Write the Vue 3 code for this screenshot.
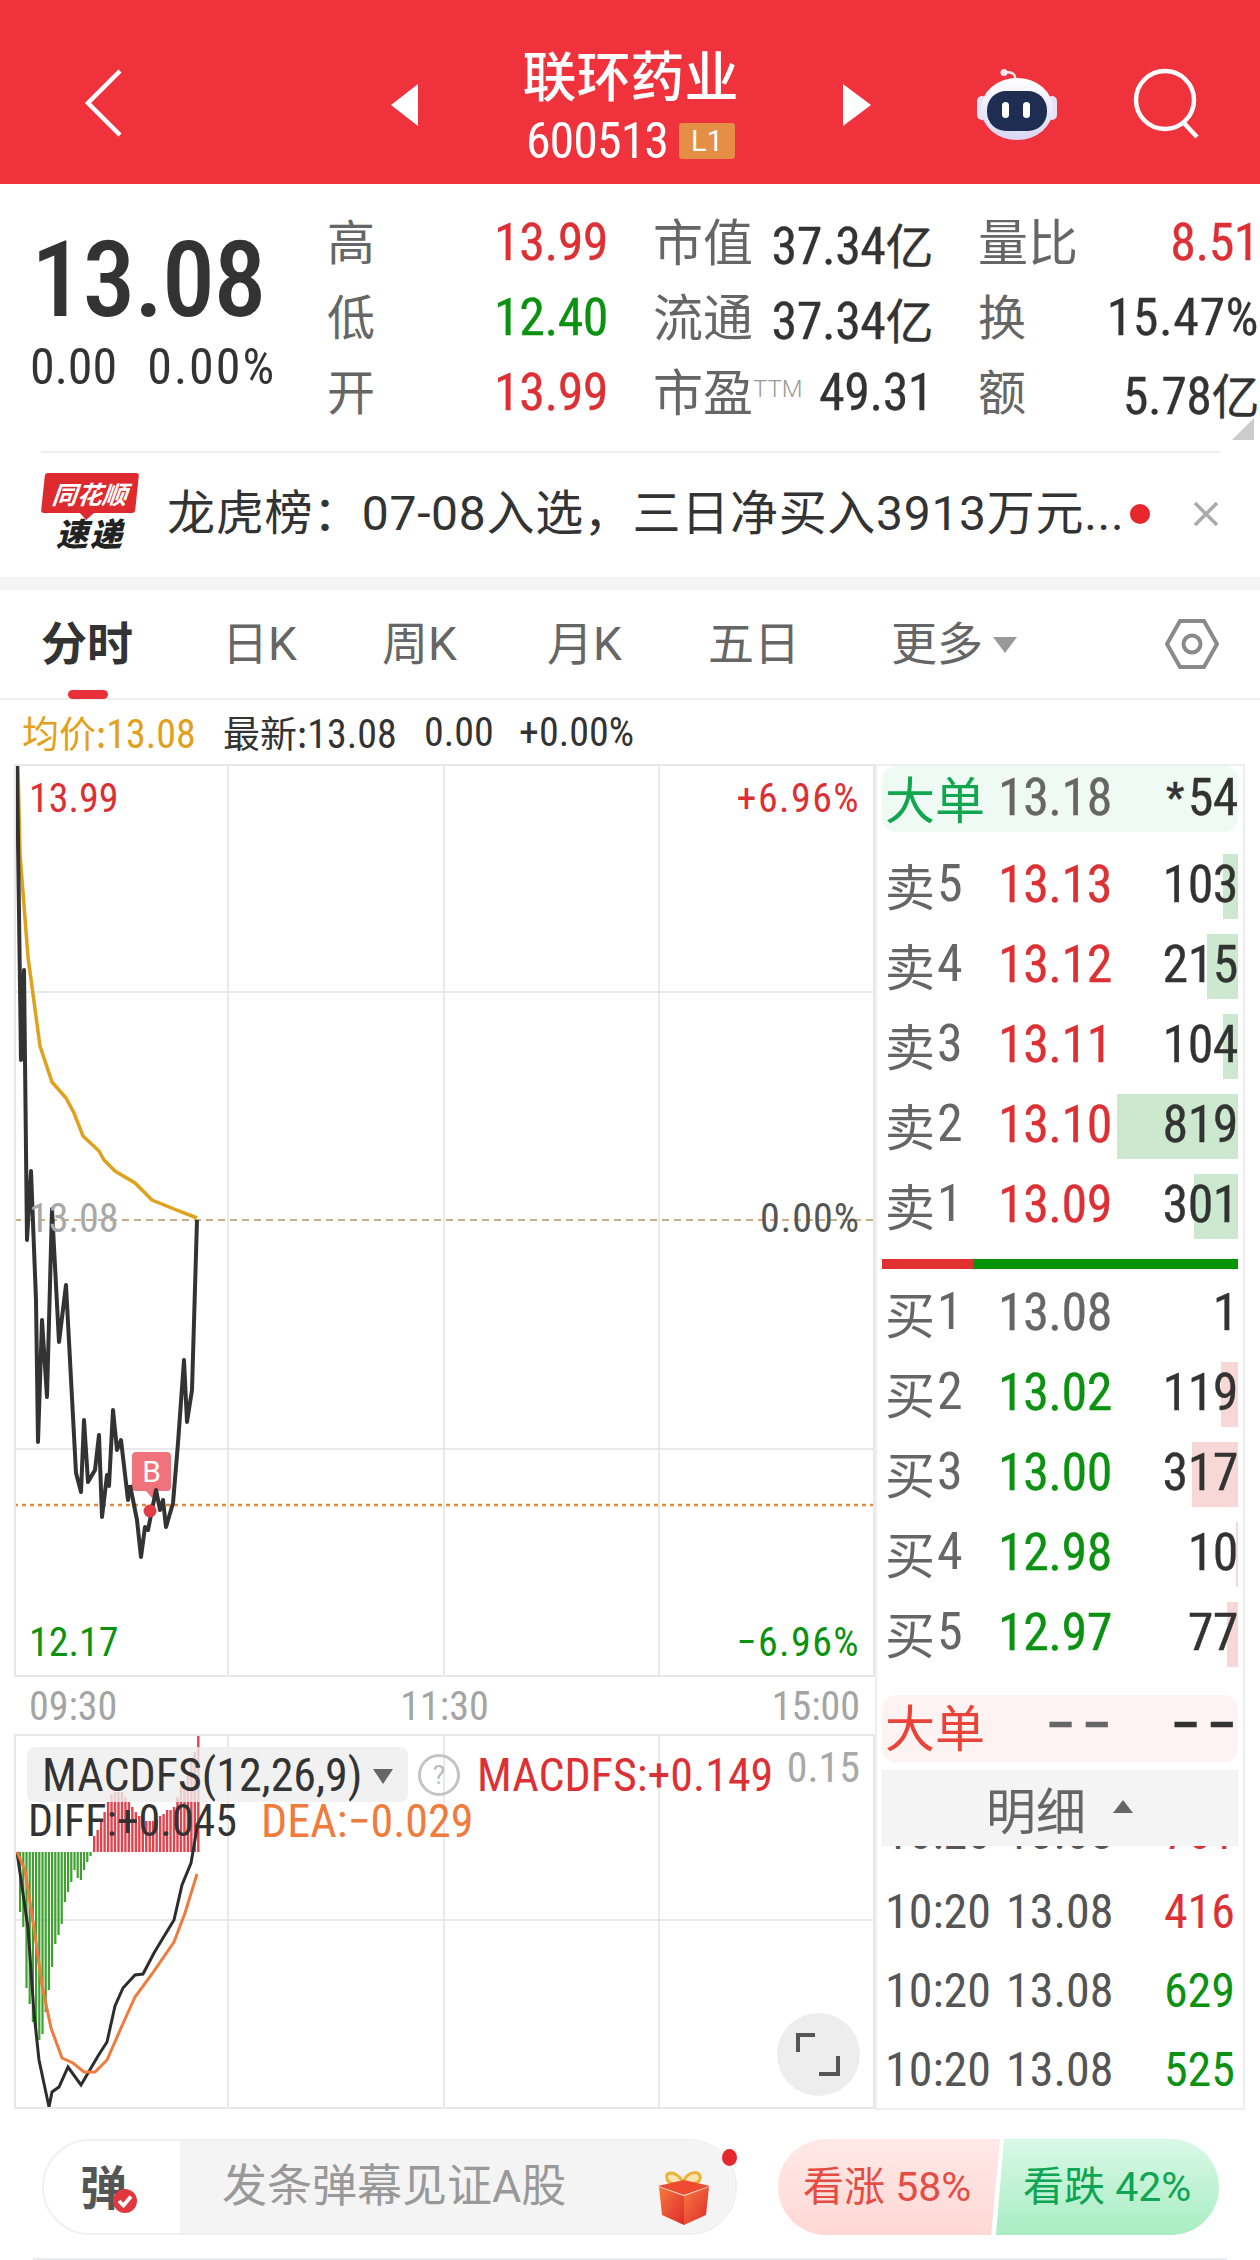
<template>
  <div class="page">
    <header class="topbar">
      <svg class="back" viewBox="0 0 38 68"><path d="M36 2 L4 34 L36 66" /></svg>
      <i class="tri tri-left"></i>
      <div class="title">
        <div class="name">联环药业</div>
        <div class="code"><span>600513</span><b>L1</b></div>
      </div>
      <i class="tri tri-right"></i>
      <svg class="robot" viewBox="0 0 80 72">
        <defs>
          <linearGradient id="robotShell" x1="0" y1="0" x2="0" y2="1">
            <stop offset="0" stop-color="#ffffff" />
            <stop offset="1" stop-color="#d9d6f5" />
          </linearGradient>
        </defs>
        <path d="M38 12 C39 5 36 3 28 3" fill="none" stroke="#f4e6ee" stroke-width="2.5" />
        <circle cx="27" cy="3.5" r="3.5" fill="#f6eaf0" />
        <rect x="0" y="27" width="10" height="24" rx="5" fill="#e6e3f6" />
        <rect x="70" y="27" width="10" height="24" rx="5" fill="#e6e3f6" />
        <ellipse cx="40" cy="40" rx="36" ry="31" fill="url(#robotShell)" />
        <rect x="10" y="22" width="60" height="40" rx="19" fill="#1f2d52" />
        <rect x="25" y="33" width="7" height="16" rx="3.5" fill="#fff" />
        <rect x="46" y="33" width="7" height="16" rx="3.5" fill="#fff" />
      </svg>
      <svg class="search" viewBox="0 0 68 72">
        <circle cx="32" cy="32" r="29" />
        <path d="M50 54 L64 69" />
      </svg>
    </header>

    <section class="quote">
      <div class="now">
        <div class="big">13.08</div>
        <div class="chg"><span>0.00</span><span class="pct">0.00%</span></div>
      </div>
      <div class="stats">
        <div v-for="s in stats" :key="s.label" class="stat">
          <span class="lab" :class="{ one: s.label.length === 1 }">{{ s.label }}<em v-if="s.sup">{{ s.sup }}</em></span>
          <span class="val" :class="s.cls">{{ s.value }}<small v-if="s.unit">{{ s.unit }}</small></span>
        </div>
      </div>
      <i class="corner"></i>
    </section>

    <section class="news">
      <div class="logo">
        <div class="bubble"><span>同花顺</span></div>
        <div class="sudi">速递</div>
      </div>
      <div class="news-text">{{ newsText }}</div>
      <i class="news-dot"></i>
      <svg class="close" viewBox="0 0 26 26"><path d="M2 2 L24 24 M24 2 L2 24" /></svg>
    </section>

    <div class="gap"></div>

    <nav class="tabs">
      <span v-for="t in tabs" :key="t.name" class="tab" :class="{ active: t.active }" :style="{ width: t.w + 'px' }">{{ t.name }}</span>
      <span class="tab more">更多<i></i></span>
      <svg class="hex" viewBox="0 0 54 54">
        <path d="M15 4 H39 L52 27 L39 50 H15 L2 27 Z" />
        <circle cx="27" cy="27" r="8.5" />
      </svg>
    </nav>

    <div class="info">
      <span class="avg"><b>均价:</b>13.08</span>
      <span class="w1"><b>最新:</b>13.08</span>
      <span class="w2">0.00</span>
      <span class="w3">+0.00%</span>
    </div>

    <main class="main">
      <div class="chart-col">
        <div class="pane pane-price">
          <svg class="plot" viewBox="14 764 861 913">
            <path class="grid" d="M228 764V1677M444 764V1677M659 764V1677M14 992H875M14 1449H875" />
            <path d="M14 1220H875" stroke="#c9ad85" stroke-width="2" stroke-dasharray="7 5" fill="none" />
            <path d="M14 1505H875" stroke="#df8c3e" stroke-width="2.5" stroke-dasharray="4 4" fill="none" />
            <path :d="line(avgLine)" fill="none" stroke="#e0a11c" stroke-width="3.5" />
            <path :d="line(priceLine)" fill="none" stroke="#333" stroke-width="4" stroke-linejoin="round" />
            <path d="M136 1452H167Q171 1452 171 1456V1487Q171 1491 167 1491H158L152 1498L146 1491H136Q132 1491 132 1487V1456Q132 1452 136 1452Z" fill="#f0737b" />
            <path :d="line(priceTail)" fill="none" stroke="#333" stroke-width="4" stroke-linejoin="round" />
            <circle cx="150" cy="1511" r="6.5" fill="#e33b45" />
          </svg>
          <span class="mark-b">B</span>
          <span class="lbl red l1">13.99</span>
          <span class="lbl red r1">+6.96%</span>
          <span class="lbl grey l2">13.08</span>
          <span class="lbl dark r2">0.00%</span>
          <span class="lbl green l3">12.17</span>
          <span class="lbl green r3">−6.96%</span>
        </div>
        <div class="axis"><span>09:30</span><span class="mid">11:30</span><span>15:00</span></div>
        <div class="pane pane-macd">
          <svg class="plot" viewBox="14 1735 861 375">
            <path class="grid" d="M228 1735V2110M444 1735V2110M659 1735V2110M14 1921H875" />
            <rect v-for="(b, i) in greenBars" :key="'g' + i" :x="19 + i * 3.2" y="1853" width="2.2" :height="b" fill="#3da12f" />
            <rect v-for="(b, i) in redBars" :key="'r' + i" :x="93 + i * 3.47" :y="1853 - b" width="2.4" :height="b" fill="#e4434d" />
            <path :d="line(diffLine)" fill="none" stroke="#2d2d2d" stroke-width="3" />
            <path :d="line(deaLine)" fill="none" stroke="#ef7b3c" stroke-width="3" />
          </svg>
          <div class="legend">
            <div class="legend-top">
              <div class="pick">MACDFS(12,26,9)<i></i></div>
              <span class="ask">?</span>
              <span class="m-val">MACDFS:+0.149</span>
              <span class="m-max">0.15</span>
            </div>
            <div class="legend-low"><span class="diff">DIFF:+0.045</span><span class="dea">DEA:−0.029</span></div>
          </div>
          <button class="expand">
            <svg viewBox="0 0 44 45"><path d="M2 20 V3 H19 M42 24 V42 H23" /></svg>
          </button>
        </div>
      </div>

      <aside class="panel">
        <div class="big-order buy-tone">
          <span class="cn">大单</span><span class="p grey-t">13.18</span><span class="q"><small>*</small>54</span>
        </div>
        <div class="book">
          <div v-for="r in sells" :key="r.n" class="row">
            <i class="depth sell" :style="{ width: r.bar + 'px' }"></i>
            <span class="cn lab2">卖<u>{{ r.n }}</u></span><span class="p red">{{ r.p }}</span><span class="q">{{ r.q }}</span>
          </div>
        </div>
        <div class="split"><i></i><i></i></div>
        <div class="book buys">
          <div v-for="r in buys" :key="r.n" class="row">
            <i class="depth buy" :style="{ width: r.bar + 'px' }"></i>
            <span class="cn lab2">买<u>{{ r.n }}</u></span><span class="p" :class="r.cls">{{ r.p }}</span><span class="q">{{ r.q }}</span>
          </div>
        </div>
        <div class="big-order sell-tone">
          <span class="cn">大单</span><span class="p grey-t dash">––</span><span class="q dash">––</span>
        </div>
        <div class="detail-head">明细<i></i></div>
        <div class="ticks">
          <div v-for="(t, i) in ticks" :key="i" class="tick">
            <span>10:20</span><span>13.08</span><span class="tq" :class="t.cls">{{ t.q }}</span>
          </div>
        </div>
      </aside>
    </main>

    <footer class="bottom">
      <div class="danmu">
        <div class="dan">弹<i><svg viewBox="0 0 16 16"><path d="M4 8 L7 11 L12 5" /></svg></i></div>
        <div class="dan-input">
          <span>发条弹幕见证A股</span>
          <svg class="gift" viewBox="0 0 52 56">
            <defs>
              <linearGradient id="giftBox" x1="0" y1="0" x2="1" y2="1">
                <stop offset="0" stop-color="#f87a3c" />
                <stop offset="1" stop-color="#dc2a2e" />
              </linearGradient>
            </defs>
            <path d="M25 13 C17 0 6 3 9 10 C11 16 20 15 25 13 C31 0 44 2 42 10 C40 16 31 15 25 13 Z" fill="#fbe4b4" stroke="#eeb133" stroke-width="3" />
            <path d="M0 17 L26 11 L52 17 L26 26 Z" fill="#ef4b30" />
            <path d="M1 18 L26 27 V56 L4 46 Z" fill="url(#giftBox)" />
            <path d="M51 18 L26 27 V56 L48 46 Z" fill="url(#giftBox)" />
          </svg>
          <i class="dan-dot"></i>
        </div>
      </div>
      <div class="vote">
        <div class="up">看涨 58%</div>
        <div class="down">看跌 42%</div>
      </div>
    </footer>
    <div class="homeline"></div>
  </div>
</template>

<script setup>
const newsText = '龙虎榜\uff1a07-08入选\uff0c三日净买入3913万元...'

const stats = [
  { label: '高', value: '13.99', cls: 'red' },
  { label: '市值', value: '37.34', unit: '亿' },
  { label: '量比', value: '8.51', cls: 'red' },
  { label: '低', value: '12.40', cls: 'green' },
  { label: '流通', value: '37.34', unit: '亿' },
  { label: '换', value: '15.47%', cls: 'wide' },
  { label: '开', value: '13.99', cls: 'red' },
  { label: '市盈', sup: 'TTM', value: '49.31' },
  { label: '额', value: '5.78', unit: '亿' }
]

const tabs = [
  { name: '分时', w: 181, active: true },
  { name: '日K', w: 160 },
  { name: '周K', w: 165 },
  { name: '月K', w: 161 },
  { name: '五日', w: 183 }
]

const sells = [
  { n: 5, p: '13.13', q: 103, bar: 15 },
  { n: 4, p: '13.12', q: 215, bar: 31 },
  { n: 3, p: '13.11', q: 104, bar: 15 },
  { n: 2, p: '13.10', q: 819, bar: 121 },
  { n: 1, p: '13.09', q: 301, bar: 44 }
]

const buys = [
  { n: 1, p: '13.08', q: 1, bar: 0, cls: 'grey-t' },
  { n: 2, p: '13.02', q: 119, bar: 17, cls: 'green' },
  { n: 3, p: '13.00', q: 317, bar: 46, cls: 'green' },
  { n: 4, p: '12.98', q: 10, bar: 2, cls: 'green' },
  { n: 5, p: '12.97', q: 77, bar: 11, cls: 'green' }
]

const ticks = [
  { q: 761, cls: 'red' },
  { q: 416, cls: 'red' },
  { q: 629, cls: 'green' },
  { q: 525, cls: 'green' }
]

const avgLine = [[18,766],[20,854],[28,957],[40,1046],[52,1082],[66,1098],[74,1113],[83,1136],[99,1151],[104,1160],[115,1171],[135,1183],[152,1200],[174,1209],[197,1218]]

const priceLine = [[17,766],[21,1060],[24,970],[27,1240],[31,1171],[36,1300],[38,1442],[42,1320],[47,1397],[52,1209],[59,1342],[66,1285],[76,1473],[81,1492],[84,1420],[88,1482],[95,1470],[99,1435],[102,1517],[107,1475],[109,1486],[113,1410],[117,1450],[121,1440],[128,1500],[130,1485]]

const priceTail = [[130,1485],[137,1520],[141,1557],[145,1527],[148,1530],[156,1490],[160,1510],[163,1500],[166,1527],[173,1503],[178,1443],[184,1360],[187,1422],[192,1390],[197,1220]]

const greenBars = [60, 75, 136, 152, 170, 185, 188, 182, 160, 138, 115, 92, 83, 72, 50, 40, 30, 18, 26, 28, 18, 10, 4]
const redBars = [16, 22, 30, 40, 50, 58, 60, 60, 60, 55, 50, 45, 40, 36, 34, 31, 31, 31, 32, 36, 38, 42, 42, 45, 55, 65, 70, 80, 90, 100, 118]

const diffLine = [[17,1853],[28,1929],[34,2014],[39,2061],[49,2108],[52,2093],[59,2088],[68,2068],[81,2086],[98,2057],[107,2043],[115,2007],[123,1989],[135,1976],[143,1975],[154,1954],[163,1939],[174,1921],[182,1886],[191,1864],[197,1829]]
const deaLine = [[17,1853],[25,1871],[34,1929],[42,1986],[51,2029],[62,2059],[73,2064],[84,2073],[95,2073],[107,2061],[121,2029],[135,1998],[152,1975],[174,1943],[185,1914],[197,1875]]

const line = pts => 'M' + pts.map(p => p.join(' ')).join('L')
</script>

<style>
html, body { margin: 0; padding: 0; background: #fff; }
</style>

<style scoped>
.page {
  --cjk: Roboto, "Noto Sans CJK SC", sans-serif;
  width: 1260px;
  height: 2260px;
  overflow: hidden;
  background: #fff;
  font-family: Roboto, "Noto Sans CJK SC", sans-serif;
  font-stretch: 75%;
  color: #333;
}
.red { color: #dd3035; }
.green { color: #0a9210; }
.grey-t { color: #666; }

.topbar {
  height: 184px;
  background: #ef323b;
  display: flex;
  align-items: center;
  padding-left: 84px;
  color: #fff;
}
.back { width: 38px; height: 68px; margin-top: 22px; }
.back path { fill: none; stroke: #fff; stroke-width: 4.5; }
.tri { display: block; width: 0; height: 0; border-top: 21px solid transparent; border-bottom: 21px solid transparent; }
.tri-left { margin-left: 269px; border-right: 27px solid #fff; margin-top: 26px; }
.tri-right { border-left: 28px solid #fff; margin-top: 26px; }
.title { width: 425px; align-self: flex-start; padding-top: 42px; text-align: center; }
.name { font: 500 54px/64px "Noto Sans CJK SC", sans-serif; }
.code { display: flex; justify-content: center; align-items: center; gap: 11px; height: 40px; margin-top: 15px; font-size: 50px; letter-spacing: -1px; }
.code b { width: 56px; height: 36px; border-radius: 3px; background: #e48e46; font: 400 29px/36px Roboto, sans-serif; letter-spacing: 0; }
.robot { width: 80px; height: 72px; margin-left: 106px; margin-top: 26px; }
.search { width: 68px; height: 72px; margin-left: 76px; margin-top: 24px; }
.search circle, .search path { fill: none; stroke: #fff; stroke-width: 4.5; }

.quote { height: 267px; display: flex; position: relative; padding-top: 18px; box-sizing: border-box; }
.now { width: 327px; flex: none; padding-top: 21px; }
.big { font-size: 106px; line-height: 114px; margin-left: 31px; font-weight: 500; letter-spacing: -1.5px; }
.chg { display: flex; gap: 30px; margin: 1px 0 0 30px; font-size: 50px; line-height: 58px; }
.pct { letter-spacing: 2px; }
.stats { display: grid; grid-template-columns: 281px 280px 281px; column-gap: 45px; grid-auto-rows: 75px; }
.stat { display: flex; justify-content: space-between; align-items: center; white-space: nowrap; }
.lab { font: 400 50px/75px "Noto Sans CJK SC", sans-serif; color: #666; }
.lab.one { font-size: 48px; }
.lab em { font: 300 24px Roboto, sans-serif; color: #999; vertical-align: 14px; }
.val { font-size: 52px; letter-spacing: -.5px; margin-top: 6px; -webkit-text-stroke: .3px currentColor; }
.val.wide { letter-spacing: .5px; }
.val small { font: 400 48px "Noto Sans CJK SC", sans-serif; }
.corner { position: absolute; right: 6px; top: 234px; width: 0; height: 0; border-left: 22px solid transparent; border-bottom: 22px solid #ccc; }

.news { height: 126px; display: flex; align-items: center; position: relative; box-sizing: border-box; }
.news::before { content: ""; position: absolute; left: 41px; right: 40px; top: 0; height: 2px; background: #eee; }
.logo { width: 94px; margin-left: 43px; margin-top: -4px; flex: none; }
.bubble { height: 40px; background: #dd2a2e; border-radius: 3px; transform: skewX(-6deg); position: relative; text-align: center; color: #fff; font: italic 700 25px/40px "Noto Sans CJK SC", sans-serif; }
.bubble::after { content: ""; position: absolute; left: 38px; bottom: -7px; border-left: 8px solid transparent; border-right: 8px solid transparent; border-top: 8px solid #dd2a2e; }
.sudi { font: italic 900 32px/38px "Noto Sans CJK SC", sans-serif; text-align: center; color: #222; letter-spacing: 2px; }
.news-text { margin-left: 30px; width: 962px; white-space: nowrap; font: 400 48px/60px var(--cjk); letter-spacing: .7px; color: #333; }
.news-dot { width: 20px; height: 20px; border-radius: 50%; background: #e8262c; margin-left: 1px; }
.close { width: 26px; height: 26px; margin-left: 43px; }
.close path { stroke: #aaa; stroke-width: 3.5; fill: none; }

.gap { height: 13px; background: #f5f5f5; }

.tabs { height: 110px; display: flex; align-items: center; padding-left: 41px; box-sizing: border-box; border-bottom: 2px solid #eee; position: relative; }
.tab { font: 400 46px/60px var(--cjk); color: #666; display: block; }
.tab.active { font-weight: 700; color: #333; position: relative; }
.tab.active::after { content: ""; position: absolute; left: 27px; top: 76px; width: 40px; height: 9px; border-radius: 5px; background: #e8303a; }
.more { display: flex; align-items: center; }
.more i { width: 0; height: 0; margin-left: 10px; margin-top: 2px; border-left: 12px solid transparent; border-right: 12px solid transparent; border-top: 16px solid #999; }
.hex { position: absolute; left: 1165px; top: 27px; width: 54px; height: 54px; }
.hex path, .hex circle { fill: none; stroke: #8a8a8a; stroke-width: 4; }

.info { height: 64px; display: flex; align-items: center; padding-left: 22px; font-size: 40px; box-sizing: border-box; white-space: nowrap; }
.info b { font: 400 37px "Noto Sans CJK SC", sans-serif; }
.avg { color: #e3a01b; width: 201px; }
.w1 { width: 201px; }
.w2 { width: 95px; }

.main { height: 1346px; display: flex; }
.chart-col { width: 861px; margin-left: 14px; flex: none; }
.pane { position: relative; box-sizing: border-box; }
.pane-price { height: 913px; }
.pane-macd { height: 375px; }
.plot { position: absolute; left: 0; top: 0; width: 861px; height: 100%; outline: 2px solid #e8e8e8; outline-offset: -2px; }
.grid { stroke: #e2e2e2; stroke-width: 1.5; fill: none; }
.lbl { position: absolute; font-size: 40px; line-height: 44px; white-space: nowrap; }
.grey { color: #a8a8a8; }
.dark { color: #555; }
.l1 { left: 15px; top: 13px; }
.r1 { right: 15px; top: 13px; letter-spacing: 1.4px; }
.l2 { left: 15px; top: 433px; }
.r2 { right: 15px; top: 433px; letter-spacing: 1px; }
.l3 { left: 15px; top: 857px; }
.r3 { right: 15px; top: 857px; letter-spacing: 1.4px; }
.mark-b { position: absolute; left: 118px; top: 688px; width: 39px; text-align: center; font: 400 30px/39px Roboto, sans-serif; color: #fff; }
.axis { height: 57px; display: flex; justify-content: space-between; align-items: center; padding: 2px 15px 0; font-size: 40px; color: #a4a4a4; box-sizing: border-box; }
.legend { position: absolute; left: 13px; top: 13px; right: 15px; font-size: 46px; white-space: nowrap; }
.legend-top { display: flex; align-items: center; height: 55px; }
.pick { width: 381px; height: 55px; background: rgba(238, 238, 238, .8); border-radius: 8px; padding-left: 15px; box-sizing: border-box; display: flex; align-items: center; position: relative; color: #333; flex: none; }
.pick i { position: absolute; left: 346px; top: 22px; border-left: 10px solid transparent; border-right: 10px solid transparent; border-top: 15px solid #666; }
.ask { width: 36px; height: 36px; border: 3px solid #c4c4c4; border-radius: 50%; margin-left: 10px; text-align: center; font: 400 26px/36px Roboto, sans-serif; color: #bbb; flex: none; }
.m-val { color: #dd3035; margin-left: 17px; }
.m-max { color: #a8a8a8; margin-left: auto; margin-top: -14px; font-size: 42px; }
.legend-low { display: flex; gap: 24px; height: 50px; align-items: center; margin-top: -6px; padding-left: 1px; }
.diff { color: #333; font-size: 44px; }
.dea { color: #ef7b3c; }
.expand { position: absolute; left: 763px; top: 279px; width: 83px; height: 83px; border: 0; border-radius: 50%; background: #ededed; padding: 19px; }
.expand svg { display: block; width: 44px; height: 45px; }
.expand path { fill: none; stroke: #555; stroke-width: 4; }

.panel { width: 370px; height: 1346px; flex: none; box-sizing: border-box; border: 2px solid #eee; position: relative; overflow: hidden; }
.big-order { height: 66px; margin: 0 5px; border-radius: 14px; display: flex; align-items: center; padding: 0 0 4px 3px; box-sizing: border-box; }
.big-order .cn { width: 113px; font: 400 50px/62px "Noto Sans CJK SC", sans-serif; flex: none; }
.buy-tone { background: #f0faf4; }
.buy-tone .cn { color: #12a650; }
.sell-tone { background: #fdf3f2; margin-top: 28px; height: 67px; padding-bottom: 7px; }
.sell-tone .cn { color: #ea4339; }
.p { font-size: 52px; width: 113px; flex: none; letter-spacing: -.5px; white-space: nowrap; -webkit-text-stroke: .3px currentColor; }
.q { flex: 1; text-align: right; font-size: 52px; color: #333; letter-spacing: -.5px; -webkit-text-stroke: .3px currentColor; }
.q small { font-size: 40px; vertical-align: 4px; font-weight: 700; margin-right: 4px; }
.dash { letter-spacing: 7px; white-space: nowrap; font-weight: 500; }
.p.dash { text-align: right; width: 120px; letter-spacing: 7px; }
.q.dash { margin-right: -5px; letter-spacing: 7px; }
.book { margin: 22px 5px 0; }
.row { height: 65px; margin-bottom: 15px; display: flex; align-items: center; position: relative; padding: 0 0 5px 3px; box-sizing: border-box; }
.row:last-child { margin-bottom: 0; }
.depth { position: absolute; right: 0; top: 0; bottom: 0; }
.sell { background: #cce9cf; }
.buy { background: #f8d7d7; }
.row > span { position: relative; }
.lab2 { width: 113px; flex: none; font: 400 50px/60px "Noto Sans CJK SC", sans-serif; color: #666; display: flex; align-items: center; }
.lab2 u { font: 400 52px/60px Roboto, sans-serif; font-stretch: 75%; text-decoration: none; margin-left: 2px; }
.split { display: flex; height: 10px; margin: 20px 5px 13px; }
.split i:first-child { width: 91px; background: #e33132; }
.split i:last-child { flex: 1; background: #079407; }
.buys { margin-top: 0; }
.detail-head { height: 76px; margin: 8px 5px 0; background: #f4f4f4; position: relative; z-index: 1; padding-left: 104px; box-sizing: border-box; font: 400 50px/76px "Noto Sans CJK SC", sans-serif; color: #666; }
.detail-head i { position: absolute; left: 231px; top: 30px; border-left: 10px solid transparent; border-right: 10px solid transparent; border-bottom: 13px solid #666; }
.ticks { margin-top: -53px; padding: 0 8px 0 8px; }
.tick { height: 79px; display: flex; align-items: center; font-size: 48px; color: #555; }
.tick span:first-child { width: 121px; }
.tq { margin-left: auto; }

.bottom { height: 148px; display: flex; padding-top: 29px; padding-left: 42px; box-sizing: border-box; }
.danmu { width: 695px; height: 96px; border: 2px solid #f0f0f0; border-radius: 48px; box-sizing: border-box; display: flex; flex: none; }
.dan { width: 136px; position: relative; font: 700 47px/88px "Noto Sans CJK SC", sans-serif; color: #555; padding-left: 36px; box-sizing: border-box; flex: none; }
.dan i { position: absolute; left: 69px; top: 48px; width: 24px; height: 24px; border-radius: 50%; background: #e0383e; display: block; }
.dan svg { display: block; width: 24px; height: 24px; }
.dan path { fill: none; stroke: #fff; stroke-width: 2.5; }
.dan-input { flex: 1; background: #f4f4f4; border-radius: 0 46px 46px 0; position: relative; font: 400 45px/92px var(--cjk); color: #999; padding-left: 42px; }
.gift { position: absolute; left: 478px; top: 28px; width: 52px; height: 56px; }
.dan-dot { position: absolute; left: 542px; top: 8px; width: 15px; height: 17px; border-radius: 50%; background: #e5282d; }
.vote { display: flex; margin-left: 41px; height: 96px; font: 400 41px/96px var(--cjk); }
.up { width: 222px; padding-left: 25px; box-sizing: border-box; border-radius: 48px 0 0 48px; background: linear-gradient(#ffe9e7, #ffd8d5); color: #e44d43; clip-path: polygon(0 0, 100% 0, calc(100% - 9px) 100%, 0 100%); white-space: nowrap; }
.down { width: 223px; margin-left: -4px; padding-left: 27px; box-sizing: border-box; border-radius: 0 48px 48px 0; background: linear-gradient(#d9f9e7, #a8edc3); color: #10a552; clip-path: polygon(8px 0, 100% 0, 100% 100%, 0 100%); white-space: nowrap; }
.homeline { height: 2px; margin: 0 33px; background: #e6edf2; }
</style>
